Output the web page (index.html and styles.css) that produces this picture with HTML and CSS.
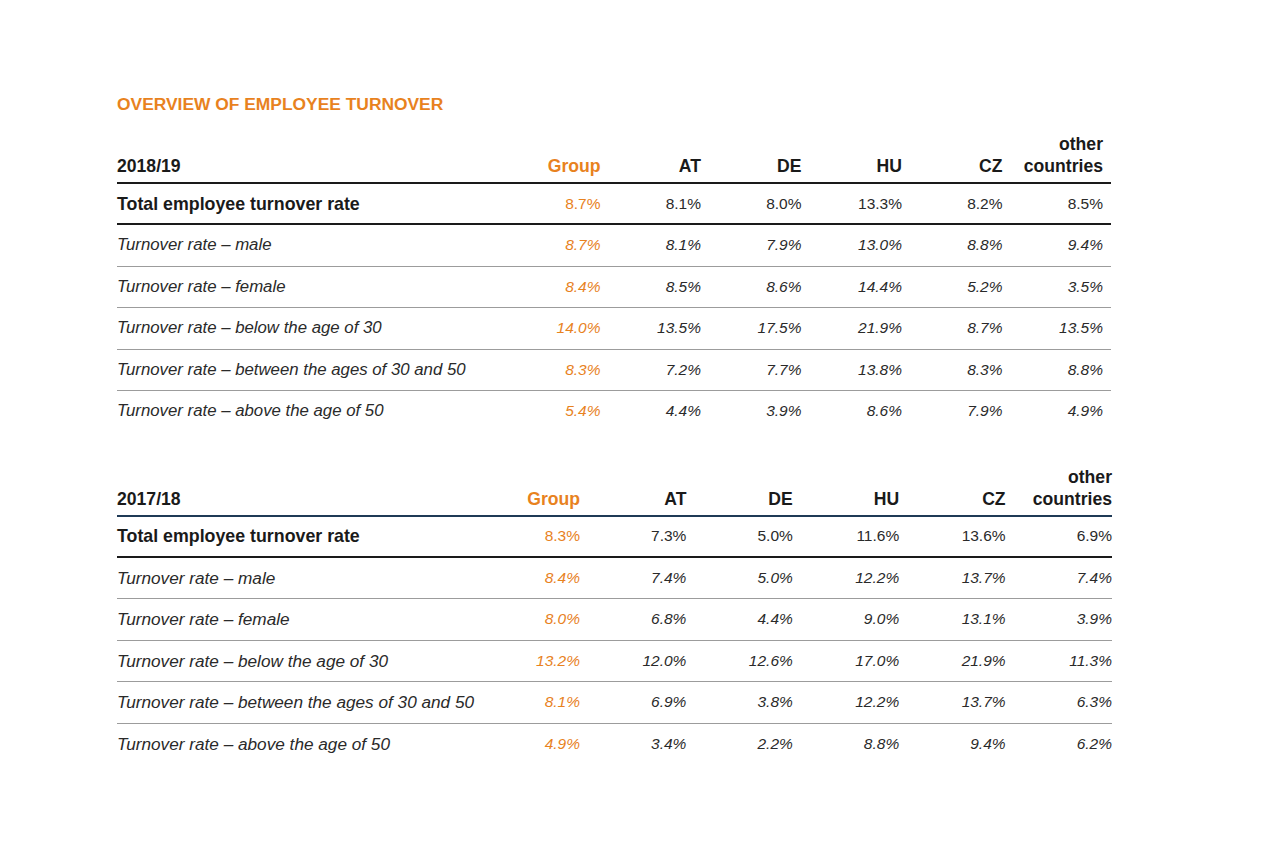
FILE: index.html
```html
<!DOCTYPE html>
<html lang="en">
<head>
<meta charset="utf-8">
<title>Overview of employee turnover</title>
<link rel="stylesheet" href="styles.css">
</head>
<body>
<main class="page">
  <h2 class="title">OVERVIEW OF EMPLOYEE TURNOVER</h2>

  <table class="turnover t1">
    <colgroup>
      <col class="c-label"><col class="c-num"><col class="c-num"><col class="c-num"><col class="c-num"><col class="c-num"><col class="c-num">
    </colgroup>
    <thead>
      <tr><th class="label">2018/19</th><th class="grp">Group</th><th>AT</th><th>DE</th><th>HU</th><th>CZ</th><th>other<br>countries</th></tr>
    </thead>
    <tbody>
      <tr class="total"><td class="label">Total employee turnover rate</td><td class="grp">8.7%</td><td>8.1%</td><td>8.0%</td><td>13.3%</td><td>8.2%</td><td>8.5%</td></tr>
      <tr><td class="label">Turnover rate – male</td><td class="grp">8.7%</td><td>8.1%</td><td>7.9%</td><td>13.0%</td><td>8.8%</td><td>9.4%</td></tr>
      <tr><td class="label">Turnover rate – female</td><td class="grp">8.4%</td><td>8.5%</td><td>8.6%</td><td>14.4%</td><td>5.2%</td><td>3.5%</td></tr>
      <tr><td class="label">Turnover rate – below the age of 30</td><td class="grp">14.0%</td><td>13.5%</td><td>17.5%</td><td>21.9%</td><td>8.7%</td><td>13.5%</td></tr>
      <tr><td class="label">Turnover rate – between the ages of 30 and 50</td><td class="grp">8.3%</td><td>7.2%</td><td>7.7%</td><td>13.8%</td><td>8.3%</td><td>8.8%</td></tr>
      <tr><td class="label">Turnover rate – above the age of 50</td><td class="grp">5.4%</td><td>4.4%</td><td>3.9%</td><td>8.6%</td><td>7.9%</td><td>4.9%</td></tr>
    </tbody>
  </table>

  <table class="turnover t2">
    <colgroup>
      <col class="c-label"><col class="c-grp"><col class="c-num"><col class="c-num"><col class="c-num"><col class="c-num"><col class="c-num">
    </colgroup>
    <thead>
      <tr><th class="label">2017/18</th><th class="grp">Group</th><th>AT</th><th>DE</th><th>HU</th><th>CZ</th><th>other<br>countries</th></tr>
    </thead>
    <tbody>
      <tr class="total"><td class="label">Total employee turnover rate</td><td class="grp">8.3%</td><td>7.3%</td><td>5.0%</td><td>11.6%</td><td>13.6%</td><td>6.9%</td></tr>
      <tr><td class="label">Turnover rate – male</td><td class="grp">8.4%</td><td>7.4%</td><td>5.0%</td><td>12.2%</td><td>13.7%</td><td>7.4%</td></tr>
      <tr><td class="label">Turnover rate – female</td><td class="grp">8.0%</td><td>6.8%</td><td>4.4%</td><td>9.0%</td><td>13.1%</td><td>3.9%</td></tr>
      <tr><td class="label">Turnover rate – below the age of 30</td><td class="grp">13.2%</td><td>12.0%</td><td>12.6%</td><td>17.0%</td><td>21.9%</td><td>11.3%</td></tr>
      <tr><td class="label">Turnover rate – between the ages of 30 and 50</td><td class="grp">8.1%</td><td>6.9%</td><td>3.8%</td><td>12.2%</td><td>13.7%</td><td>6.3%</td></tr>
      <tr><td class="label">Turnover rate – above the age of 50</td><td class="grp">4.9%</td><td>3.4%</td><td>2.2%</td><td>8.8%</td><td>9.4%</td><td>6.2%</td></tr>
    </tbody>
  </table>
</main>
</body>
</html>
```

FILE: styles.css
```css
html, body {
  margin: 0;
  padding: 0;
  background: #ffffff;
}

body {
  font-family: "Liberation Sans", Arial, Helvetica, sans-serif;
  color: #1c1c1c;
}

.page {
  padding: 94px 0 0 117px;
}

.title {
  margin: 0;
  font-size: 17.4px;
  line-height: 20px;
  font-weight: 700;
  color: #e8821e;
}

.turnover {
  border-collapse: collapse;
  table-layout: fixed;
}

.t1 {
  width: 994px;
  margin-top: 19px;
}

.t2 {
  width: 995px;
  margin-top: 34px;
}

.t1 .c-label { width: 391px; }
.t1 .c-num { width: 100.5px; }

.t2 .c-label { width: 357px; }
.t2 .c-grp { width: 106px; }
.t2 .c-num { width: 106.4px; }

.turnover th,
.turnover td {
  padding: 0;
  text-align: right;
  white-space: nowrap;
}

.t1 th, .t1 td { padding-right: 8px; }
.t2 th, .t2 td { padding-right: 0; }

.turnover th {
  font-size: 17.6px;
  font-weight: 700;
  line-height: 22px;
  vertical-align: bottom;
  padding-bottom: 5px;
  color: #1a1a1a;
}

.t1 thead tr { border-bottom: 2px solid #1a1a1a; }
.t2 thead tr { border-bottom: 2px solid #1f3a56; }

.turnover .label {
  text-align: left;
  padding-right: 0;
}

.turnover .grp {
  color: #e8821e;
}

.turnover td {
  height: 40.5px;
  font-size: 15.5px;
  line-height: 20px;
  vertical-align: middle;
  font-style: italic;
  color: #2a2a2a;
}

.t1 td.label {
  font-size: 16.8px;
}

.t2 td.label {
  font-size: 17.2px;
}

.turnover tbody tr {
  border-bottom: 1px solid #9c9c9c;
}

.turnover tbody tr:last-child {
  border-bottom: none;
}

.turnover tr.total {
  border-bottom: 2px solid #1a1a1a;
}

.turnover tr.total td {
  height: 39px;
  font-style: normal;
}

.turnover tr.total td.label {
  font-weight: 700;
  font-size: 17.8px;
  color: #1a1a1a;
}
```
